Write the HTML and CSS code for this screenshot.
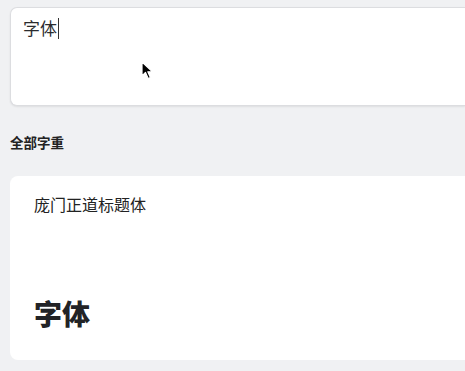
FILE: index.html
```html
<!DOCTYPE html>
<html lang="zh-CN">
<head>
<meta charset="utf-8">
<link rel="stylesheet" href="styles.css">
</head>
<body>
<div class="page">
  <div class="input-card">
    <div class="input-text">字体<span class="caret"></span></div>
    <svg class="pointer" width="14" height="20" viewBox="0 0 14 20">
      <path d="M1 1 L1 15 L4.5 11.5 L7.2 17.5 L9.4 16.5 L6.8 10.8 L11.5 10.8 Z" fill="#000" stroke="#fff" stroke-width="1.2" stroke-linejoin="round"/>
    </svg>
  </div>
  <div class="section-title">全部字重</div>
  <div class="font-card">
    <div class="font-name">庞门正道标题体</div>
    <div class="font-sample">字体</div>
  </div>
</div>
</body>
</html>
```

FILE: styles.css
```css
html, body {
  margin: 0;
  padding: 0;
  background: #f0f1f3;
  overflow: hidden;
  font-family: "Noto Sans CJK SC", "Noto Sans", sans-serif;
  color: #1f2023;
}
.page {
  padding: 7px 0 0 10px;
  display: flex;
  flex-direction: column;
}
.input-card {
  position: relative;
  height: 99px;
  background: #fff;
  border: 1px solid #dcdde0;
  border-right: none;
  border-radius: 7px 0 0 7px;
  box-shadow: 0 1px 2px rgba(0,0,0,0.08);
  padding: 8px 12px;
  box-sizing: border-box;
}
.input-text {
  font-size: 17px;
  line-height: 24px;
  color: #2a2b2e;
  display: flex;
  align-items: center;
}
.caret {
  display: inline-block;
  width: 1px;
  height: 21px;
  background: #333;
  margin-left: 1px;
}
.pointer {
  position: absolute;
  left: 130px;
  top: 53px;
}
.section-title {
  margin-top: 27px;
  font-size: 13.5px;
  font-weight: 700;
  line-height: 18px;
  color: #222;
}
.font-card {
  margin-top: 25px;
  height: 184px;
  background: #fff;
  border-radius: 8px 0 0 8px;
  padding: 17px 24px 0;
  box-sizing: border-box;
  display: flex;
  flex-direction: column;
}
.font-name {
  font-size: 16px;
  line-height: 22px;
  color: #222;
}
.font-sample {
  margin-top: 80px;
  font-size: 28px;
  line-height: 36px;
  font-weight: 900;
  color: #222326;
}
```
